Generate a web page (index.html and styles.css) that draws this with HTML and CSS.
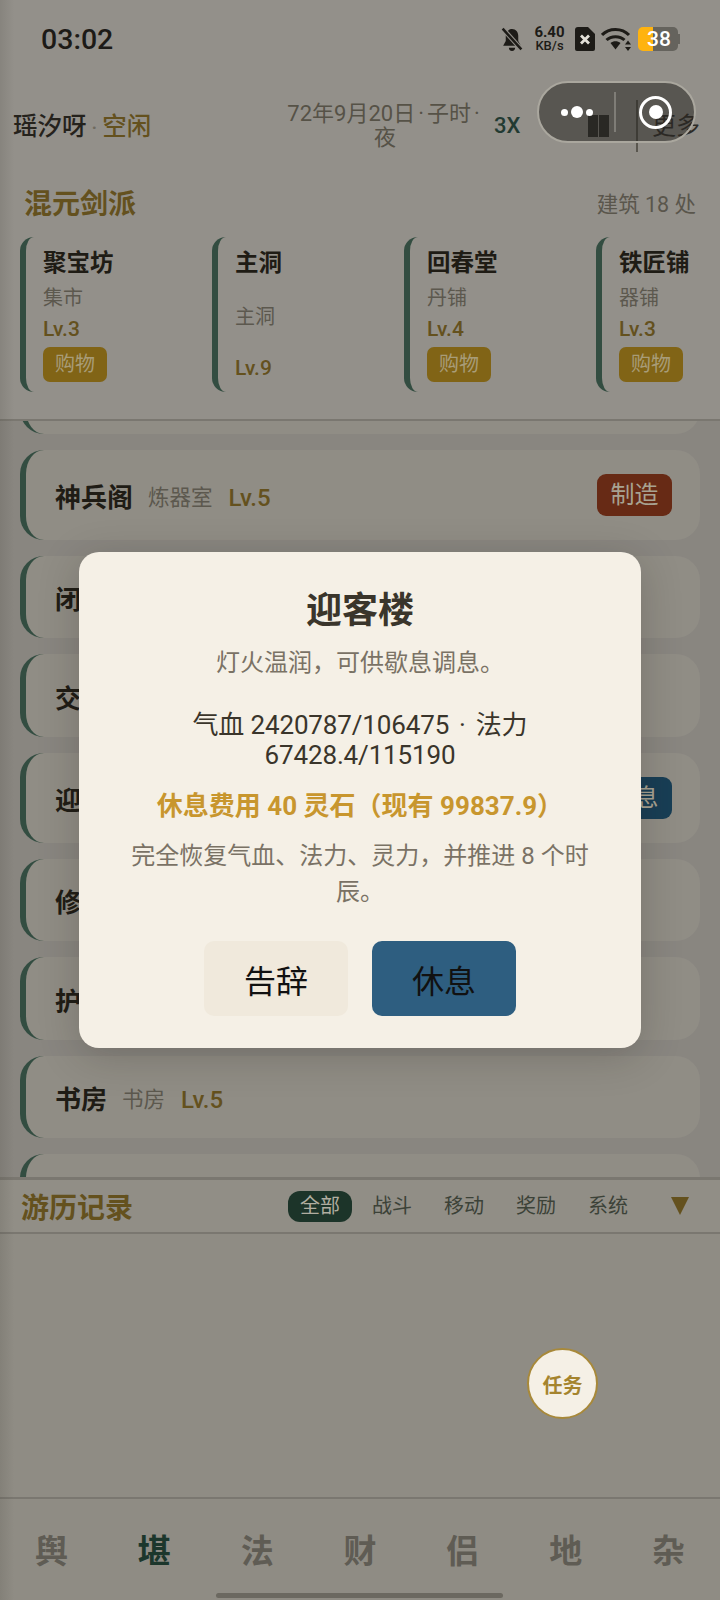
FILE: index.html
```html
<!DOCTYPE html>
<html lang="zh-CN">
<head>
    <meta charset="UTF-8">
    <meta name="viewport" content="width=device-width, initial-scale=1.0">
    <title>混元剑派</title>
    <link rel="stylesheet" href="styles.css">
</head>
<body>
<div class="app">
    <section class="top">
        <div class="status">
            <span class="clock">03:02</span>
            <div class="status-icons">
                <svg class="ic-bell" width="22" height="25" viewBox="0 0 21 24">
                    <path d="M10.500 2c-3.800 0-6 3-6 6.500v5l-2.500 4.500h17l-2.500-4.500v-5c0-3.500-2.200-6.500-6-6.500z" fill="#1d1b17"/>
                    <path d="M7.500 20h6a3 3 0 0 1-6 0z" fill="#1d1b17"/>
                    <path d="M1 1l19 21" stroke="#93908a" stroke-width="4.500"/>
                    <path d="M1.500 1.500l18 20" stroke="#1d1b17" stroke-width="2.400"/>
                </svg>
                <div class="speed"><b>6.40</b><span>KB/s</span></div>
                <svg class="ic-sim" width="20" height="24" viewBox="0 0 20 24">
                    <path d="M3 0h10l7 7v15a2 2 0 0 1-2 2H2a2 2 0 0 1-2-2V3a3 3 0 0 1 3-3z" fill="#1d1b17"/>
                    <path d="M6 8.500l8 8M14 8.500l-8 8" stroke="#e4e1d8" stroke-width="2.800"/>
                </svg>
                <svg class="ic-wifi" width="31" height="24" viewBox="0 0 31 24">
                    <path d="M1 8c7-7.500 20-7.500 27 0" fill="none" stroke="#1d1b17" stroke-width="3"/>
                    <path d="M5.500 13c4.500-4.500 13.500-4.500 18 0" fill="none" stroke="#1d1b17" stroke-width="3"/>
                    <path d="M9.500 16c2.800-2.300 7.200-2.300 10 0l-5 6.500z" fill="#1d1b17"/>
                    <path d="M27 13.500l3 4h-6zM27 24l3-4h-6z" fill="#1d1b17"/>
                </svg>
                <div class="battery">
                    <i class="bat-fill"></i><i class="bat-rest"></i><i class="bat-nub"></i>
                    <span>38</span>
                </div>
            </div>
        </div>

        <header class="head">
            <div class="who">瑶汐呀<span class="dot">·</span><em>空闲</em></div>
            <div class="date">72年9月20日<span class="date-dot">·</span>子时<span class="date-dot">·</span><br>夜</div>
            <div class="speed-x">3X</div>
            <div class="pause"><i></i><i></i></div>
            <div class="more">更多</div>
        </header>

        <div class="sect-head">
            <h2>混元剑派</h2>
            <span>建筑 18 处</span>
        </div>

        <div class="cards">
            <div class="card">
                <div class="card-name">聚宝坊</div>
                <div class="card-sub">集市</div>
                <div class="card-lv">Lv.3</div>
                <div class="card-btn">购物</div>
            </div>
            <div class="card">
                <div class="card-name">主洞</div>
                <div class="card-sub">主洞</div>
                <div class="card-lv">Lv.9</div>
            </div>
            <div class="card">
                <div class="card-name">回春堂</div>
                <div class="card-sub">丹铺</div>
                <div class="card-lv">Lv.4</div>
                <div class="card-btn">购物</div>
            </div>
            <div class="card">
                <div class="card-name">铁匠铺</div>
                <div class="card-sub">器铺</div>
                <div class="card-lv">Lv.3</div>
                <div class="card-btn">购物</div>
            </div>
        </div>
    </section>

    <section class="list">
        <div class="rows">
            <div class="row"></div>
            <div class="row">
                <b>神兵阁</b><span>炼器室</span><em>Lv.5</em>
                <div class="row-btn red">制造</div>
            </div>
            <div class="row"><b>闭</b></div>
            <div class="row"><b>交</b></div>
            <div class="row">
                <b>迎</b>
                <div class="row-btn blue">休息</div>
            </div>
            <div class="row"><b>修</b></div>
            <div class="row"><b>护</b></div>
            <div class="row"><b>书房</b><span>书房</span><em>Lv.5</em></div>
            <div class="row"></div>
        </div>
    </section>

    <section class="log">
        <div class="log-head">
            <h2>游历记录</h2>
            <div class="tabs">
                <span class="tab on">全部</span>
                <span class="tab">战斗</span>
                <span class="tab">移动</span>
                <span class="tab">奖励</span>
                <span class="tab">系统</span>
            </div>
            <i class="arrow"></i>
        </div>
        <div class="log-body"></div>
    </section>

    <nav class="nav">
        <span>舆</span>
        <span class="on">堪</span>
        <span>法</span>
        <span>财</span>
        <span>侣</span>
        <span>地</span>
        <span>杂</span>
    </nav>

    <div class="fab">任务</div>
    <div class="home-bar"></div>

    <div class="mask">
        <div class="dialog">
            <h3>迎客楼</h3>
            <p class="desc">灯火温润，可供歇息调息。</p>
            <p class="stats">气血 2420787/106475<span class="stats-dot">·</span>法力 67428.4/115190</p>
            <p class="cost">休息费用 40 灵石（现有 99837.9）</p>
            <p class="note">完全恢复气血、法力、灵力，并推进 8 个时辰。</p>
            <div class="dialog-btns">
                <button class="btn-leave">告辞</button>
                <button class="btn-rest">休息</button>
            </div>
        </div>
    </div>

    <div class="capsule">
        <div class="capsule-dots"><i></i><i class="big"></i><i></i></div>
        <div class="capsule-line"></div>
        <div class="capsule-ring"><i></i></div>
    </div>
</div>
</body>
</html>
```

FILE: styles.css
```css
* {
    box-sizing: border-box;
}
body {
    margin: 0;
    font-family: Roboto, "Noto Sans CJK SC", sans-serif;
    background-color: #898680;
}
h2, h3, p {
    margin: 0;
}
em, i {
    font-style: normal;
}
.app {
    position: relative;
    width: 720px;
    height: 1600px;
    overflow: hidden;
    display: flex;
    flex-direction: column;
    background-color: #898680;
}
/* dark band down the left edge */
.app::before {
    content: "";
    position: absolute;
    left: 0;
    top: 0;
    bottom: 0;
    width: 14px;
    background: linear-gradient(to right, rgba(60, 58, 50, 0.14), rgba(60, 58, 50, 0));
    z-index: 2;
}

/* top block */
.top {
    height: 421px;
    flex: none;
    background-color: #93908a;
    border-bottom: 2px solid #7a7770;
}
.status {
    height: 76px;
    display: flex;
    align-items: center;
    justify-content: space-between;
    padding: 2px 40px 0 41px;
}
.clock {
    font-size: 28.500px;
    font-weight: 500;
    color: #1d1b17;
}
.status-icons {
    display: flex;
    align-items: center;
}
.ic-bell {
    margin-right: 10px;
}
.speed {
    width: 33px;
    margin-right: 9px;
    display: flex;
    flex-direction: column;
    align-items: center;
    color: #1d1b17;
    line-height: 13px;
}
.speed b {
    font-size: 15px;
    font-weight: 700;
}
.speed span {
    font-size: 13px;
    font-weight: 500;
}
.ic-sim {
    margin-right: 6px;
}
.ic-wifi {
    margin-right: 6px;
}
.battery {
    position: relative;
    width: 42px;
    height: 24px;
    display: flex;
    align-items: center;
}
.bat-fill {
    width: 15px;
    height: 24px;
    background-color: #ffb30f;
    border-radius: 5px 0 0 5px;
}
.bat-rest {
    width: 25px;
    height: 24px;
    background-color: #65635d;
    border-radius: 0 5px 5px 0;
}
.bat-nub {
    width: 2px;
    height: 10px;
    background-color: #65635d;
}
.battery span {
    position: absolute;
    left: 9px;
    top: -4px;
    font-size: 21px;
    font-weight: 500;
    line-height: 32px;
    color: #fff;
}

.head {
    height: 100px;
    display: flex;
    align-items: center;
    padding: 0 0 0 13px;
}
.who {
    flex: none;
    width: 266px;
    padding-bottom: 4px;
    font-size: 24.500px;
    font-weight: 500;
    color: #25221c;
}
.who .dot {
    color: #6f6b60;
    font-size: 20px;
    margin: 0 5px;
}
.who em {
    color: #64511e;
}
.date {
    flex: none;
    width: 212px;
    text-align: center;
    font-size: 22px;
    line-height: 24px;
    color: #565247;
}
.date-dot {
    margin: 0 3px;
}
.speed-x {
    flex: none;
    width: 93px;
    margin-left: 3px;
    padding-bottom: 2px;
    font-size: 22px;
    font-weight: 500;
    color: #223a32;
}
.pause {
    flex: none;
    display: flex;
    gap: 1px;
    margin-left: 1px;
}
.pause i {
    width: 10px;
    height: 22px;
    background-color: #2c2a26;
}
.more {
    flex: none;
    margin-left: 27px;
    padding-left: 14px;
    font-size: 24px;
    line-height: 52px;
    color: #2f2c27;
    border-left: 2px solid #5a574f;
    white-space: nowrap;
}

.sect-head {
    height: 48px;
    margin-top: 2px;
    display: flex;
    align-items: center;
    justify-content: space-between;
    padding: 0 24px;
}
.sect-head h2 {
    font-size: 28px;
    font-weight: 700;
    color: #64511e;
}
.sect-head span {
    font-size: 21.500px;
    color: #5a564c;
}

.cards {
    display: flex;
    gap: 12px;
    padding-left: 20px;
    margin-top: 11px;
    overflow: hidden;
}
.card {
    flex: 0 0 180px;
    height: 155px;
    padding: 10px 0 10px 17px;
    display: flex;
    flex-direction: column;
    justify-content: space-between;
    align-items: flex-start;
    border-left: 6px solid #334d41;
    border-radius: 14px;
}
.card-name {
    font-size: 23.500px;
    font-weight: 700;
    line-height: 32px;
    color: #1f1c15;
}
.card-sub {
    padding-top: 1px;
    font-size: 20px;
    line-height: 28px;
    color: #5c584e;
}
.card-lv {
    font-size: 21px;
    font-weight: 500;
    line-height: 28px;
    color: #64511e;
}
.card-btn {
    width: 64px;
    height: 35px;
    border-radius: 7px;
    background-color: #816416;
    color: #a89c78;
    font-size: 20px;
    text-align: center;
    line-height: 35px;
}

/* building list, scrolled a little */
.list {
    flex: 1;
    min-height: 0;
    overflow: hidden;
    padding: 0 20px;
}
.rows {
    display: flex;
    flex-direction: column;
    gap: 16px;
    margin-top: -70px;
}
.row {
    display: flex;
    align-items: center;
    flex: none;
    min-height: 82.500px;
    padding: 0 28px 0 29px;
    line-height: 34.500px;
    background-color: #908d85;
    border-left: 6px solid #334d41;
    border-radius: 24px;
}
.row b, .row span, .row em {
    padding-top: 7px;
}
.row b {
    font-size: 26px;
    font-weight: 700;
    color: #1f1c15;
}
.row span {
    margin-left: 15px;
    font-size: 21.500px;
    color: #5c584e;
}
.row em {
    margin-left: 16px;
    font-size: 24px;
    font-weight: 500;
    color: #64511e;
}
.row-btn {
    margin: 24px 0 24px auto;
    width: 75px;
    height: 42px;
    border-radius: 9px;
    color: #a8a292;
    font-size: 24px;
    line-height: 42px;
    text-align: center;
}
.red {
    background-color: #672a15;
}
.blue {
    background-color: #183e55;
}

/* journal */
.log {
    height: 320px;
    flex: none;
    background-color: #8f8c84;
}
.log-head {
    height: 57px;
    display: flex;
    align-items: center;
    padding: 0 31px 0 21px;
    border-top: 3px solid #7a7770;
    border-bottom: 2px solid #7a7770;
    background-color: #918e86;
}
.log-head h2 {
    font-size: 28px;
    font-weight: 700;
    color: #64511e;
}
.tabs {
    margin-left: 155px;
    display: flex;
    gap: 8px;
}
.tab {
    width: 64px;
    height: 31px;
    border-radius: 12px;
    font-size: 20px;
    line-height: 31px;
    text-align: center;
    color: #3c4238;
}
.tab.on {
    background-color: #1c3429;
    color: #b0ada0;
}
.arrow {
    margin-left: auto;
    width: 0;
    height: 0;
    border-left: 9px solid transparent;
    border-right: 9px solid transparent;
    border-top: 18px solid #64511e;
}

.nav {
    height: 103px;
    flex: none;
    display: grid;
    grid-template-columns: repeat(7, 1fr);
    align-items: center;
    padding-bottom: 2px;
    border-top: 2px solid #7a7770;
    background-color: #8f8c84;
}
.nav span {
    text-align: center;
    font-size: 33px;
    font-weight: 700;
    color: #5f5c54;
}
.nav .on {
    color: #1c372c;
}

.fab {
    position: absolute;
    left: 527px;
    top: 1348px;
    width: 71px;
    height: 71px;
    border-radius: 50%;
    background-color: #f5f0e6;
    border: 2px solid #a8893a;
    color: #a5842e;
    font-size: 20px;
    font-weight: 700;
    line-height: 72px;
    text-align: center;
}
.home-bar {
    position: absolute;
    left: 216px;
    bottom: 2px;
    width: 287px;
    height: 5px;
    border-radius: 3px;
    background-color: #6b6860;
}

/* dialog */
.mask {
    position: absolute;
    left: 0;
    top: 0;
    width: 100%;
    height: 100%;
    display: flex;
    align-items: center;
    justify-content: center;
    z-index: 5;
}
.dialog {
    width: 562px;
    height: 496px;
    padding: 33px 40px 0;
    border-radius: 20px;
    background-color: #f5f0e6;
    box-shadow: 0 8px 40px rgba(30, 28, 20, 0.22);
    text-align: center;
}
.dialog h3 {
    font-size: 36px;
    font-weight: 700;
    line-height: 52px;
    color: #3a352b;
}
.desc {
    margin-top: 8px;
    font-size: 24px;
    line-height: 36px;
    color: #7a7265;
}
.stats {
    margin-top: 29px;
    font-size: 26px;
    line-height: 30px;
    letter-spacing: -0.150px;
    color: #3a352b;
}
.stats-dot {
    margin: 0 10px;
}
.cost {
    margin-top: 18px;
    font-size: 26px;
    font-weight: 700;
    line-height: 36px;
    color: #c8962e;
}
.note {
    margin-top: 14px;
    font-size: 24px;
    line-height: 36px;
    color: #7a7265;
}
.dialog-btns {
    margin-top: 31px;
    display: flex;
    justify-content: center;
    gap: 24px;
}
.dialog-btns button {
    width: 144px;
    height: 75px;
    border: none;
    border-radius: 10px;
    font-family: inherit;
    font-size: 32px;
    color: #111;
}
.btn-leave {
    background-color: #f0e9dc;
}
.btn-rest {
    background-color: #2e5e80;
}

/* native mini program capsule */
.capsule {
    position: absolute;
    left: 537px;
    top: 81px;
    width: 159px;
    height: 62px;
    display: flex;
    align-items: center;
    border-radius: 31px;
    background-color: rgba(40, 38, 35, 0.55);
    border: 2px solid #aaa79e;
    z-index: 6;
}
.capsule-dots {
    width: 75px;
    display: flex;
    align-items: center;
    justify-content: center;
    gap: 3px;
}
.capsule-dots i {
    width: 7px;
    height: 7px;
    border-radius: 50%;
    background-color: #fff;
}
.capsule-dots .big {
    width: 12px;
    height: 12px;
}
.capsule-line {
    width: 2px;
    height: 40px;
    background-color: #7f7d77;
}
.capsule-ring {
    width: 33px;
    height: 33px;
    margin-left: 23px;
    display: flex;
    align-items: center;
    justify-content: center;
    border: 3px solid #fff;
    border-radius: 50%;
}
.capsule-ring i {
    width: 14px;
    height: 14px;
    border-radius: 50%;
    background-color: #fff;
}
```
